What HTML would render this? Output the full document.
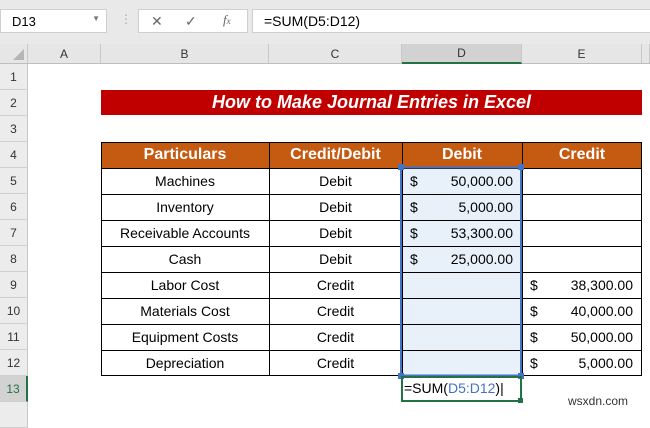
<!DOCTYPE html>
<html><head><style>
*{margin:0;padding:0;box-sizing:border-box}
body{width:650px;height:410px;background:#fff;position:relative;overflow:hidden;font-family:"Liberation Sans",sans-serif;color:#000}
.a{position:absolute}
.cell{position:absolute;display:flex;align-items:center;justify-content:center;font-size:14px}
.rh{position:absolute;left:0;width:28px;height:26px;background:#ececec;border-bottom:1px solid #d0d0d0;border-right:1px solid #c8c8c8;font-size:12px;color:#333;display:flex;align-items:center;justify-content:center}
.ch{position:absolute;top:44px;height:20px;background:#e6e6e6;border-right:1px solid #c8c8c8;border-bottom:1px solid #bdbdbd;font-size:12px;color:#333;display:flex;align-items:center;justify-content:center}
</style></head><body>
<div class="a" style="left:0;top:0;width:650px;height:44px;background:#e9e9e9"></div>
<div class="a" style="left:0;top:9px;width:107px;height:24px;background:#fff;border:1px solid #cfcfcf;font-size:13px;padding:4px 0 0 11px">D13<span style="position:absolute;right:6px;top:4px;font-size:8px;color:#777">▼</span></div>
<div class="a" style="left:120px;top:12px;font-size:12px;color:#aaa">⋮</div>
<div class="a" style="left:138px;top:9px;width:110px;height:24px;background:#fff;border:1px solid #cfcfcf;font-size:14px;color:#666">
<span class="a" style="left:12px;top:3px">✕</span><span class="a" style="left:46px;top:3px">✓</span><span class="a" style="left:84px;top:2px;font-family:'Liberation Serif',serif;font-style:italic;font-size:13px">f<span style="font-size:9px">x</span></span></div>
<div class="a" style="left:252px;top:9px;width:400px;height:24px;background:#fff;border:1px solid #cfcfcf;font-size:14px;padding:3px 0 0 11px">=SUM(D5:D12)</div>
<div class="a" style="left:0;top:44px;width:650px;height:20px;background:#e6e6e6"></div>
<div class="ch" style="left:0;width:28px"><span style="position:absolute;right:3px;bottom:3px;width:0;height:0;border-left:11px solid transparent;border-bottom:11px solid #b5b5b5"></span></div>
<div class="ch" style="left:28px;width:73px">A</div>
<div class="ch" style="left:101px;width:168px">B</div>
<div class="ch" style="left:269px;width:133px">C</div>
<div class="ch" style="left:402px;width:120px;background:#d2d2d2;border-bottom:2px solid #217346">D</div>
<div class="ch" style="left:522px;width:120px">E</div>
<div class="ch" style="left:642px;width:8px"></div>
<div class="rh" style="top:64px">1</div><div class="rh" style="top:90px">2</div><div class="rh" style="top:116px">3</div><div class="rh" style="top:142px">4</div><div class="rh" style="top:168px">5</div><div class="rh" style="top:194px">6</div><div class="rh" style="top:220px">7</div><div class="rh" style="top:246px">8</div><div class="rh" style="top:272px">9</div><div class="rh" style="top:298px">10</div><div class="rh" style="top:324px">11</div><div class="rh" style="top:350px">12</div><div class="rh" style="top:376px;background:#d2d2d2;border-right:2px solid #217346;color:#217346">13</div><div class="rh" style="top:402px"></div>
<div class="cell" style="left:101px;top:90px;width:541px;height:25px;background:#c00000;color:#fff;font-weight:bold;font-style:italic;font-size:18px">How to Make Journal Entries in Excel</div>
<div class="a" style="left:101px;top:142px;width:541px;height:26px;background:#c55a11"></div>
<div class="cell" style="left:101px;top:142px;width:168px;height:26px;color:#fff;font-weight:bold;font-size:16px">Particulars</div>
<div class="cell" style="left:269px;top:142px;width:133px;height:26px;color:#fff;font-weight:bold;font-size:16px">Credit/Debit</div>
<div class="cell" style="left:402px;top:142px;width:120px;height:26px;color:#fff;font-weight:bold;font-size:16px">Debit</div>
<div class="cell" style="left:522px;top:142px;width:120px;height:26px;color:#fff;font-weight:bold;font-size:16px">Credit</div>
<div class="a" style="left:402px;top:168px;width:120px;height:208px;background:#e8f0fa"></div>
<svg class="a" style="left:0;top:0" width="650" height="410">
<g stroke="#000" stroke-width="1" fill="none">
<rect x="101.5" y="142.5" width="540" height="233"/>
<path d="M269.5 142v234M402.5 142v234M522.5 142v234M101 168.5h541M101 194.5h541M101 220.5h541M101 246.5h541M101 272.5h541M101 298.5h541M101 324.5h541M101 350.5h541"/>
</g>
<rect x="401" y="167.5" width="120" height="208" fill="none" stroke="#4472c4" stroke-width="2"/>
<rect x="398" y="164" width="6" height="6" fill="#4472c4"/><rect x="518" y="164" width="6" height="6" fill="#4472c4"/>
<rect x="398" y="373" width="6" height="6" fill="#4472c4"/><rect x="518" y="373" width="6" height="6" fill="#4472c4"/>
<rect x="402" y="377" width="119" height="24" fill="none" stroke="#217346" stroke-width="2"/>
<rect x="518" y="398" width="5" height="5" fill="#217346"/>
</svg>
<div class="cell" style="left:101px;top:168px;width:168px;height:26px">Machines</div>
<div class="cell" style="left:101px;top:194px;width:168px;height:26px">Inventory</div>
<div class="cell" style="left:101px;top:220px;width:168px;height:26px">Receivable Accounts</div>
<div class="cell" style="left:101px;top:246px;width:168px;height:26px">Cash</div>
<div class="cell" style="left:101px;top:272px;width:168px;height:26px">Labor Cost</div>
<div class="cell" style="left:101px;top:298px;width:168px;height:26px">Materials Cost</div>
<div class="cell" style="left:101px;top:324px;width:168px;height:26px">Equipment Costs</div>
<div class="cell" style="left:101px;top:350px;width:168px;height:26px">Depreciation</div>
<div class="cell" style="left:269px;top:168px;width:133px;height:26px">Debit</div>
<div class="cell" style="left:269px;top:194px;width:133px;height:26px">Debit</div>
<div class="cell" style="left:269px;top:220px;width:133px;height:26px">Debit</div>
<div class="cell" style="left:269px;top:246px;width:133px;height:26px">Debit</div>
<div class="cell" style="left:269px;top:272px;width:133px;height:26px">Credit</div>
<div class="cell" style="left:269px;top:298px;width:133px;height:26px">Credit</div>
<div class="cell" style="left:269px;top:324px;width:133px;height:26px">Credit</div>
<div class="cell" style="left:269px;top:350px;width:133px;height:26px">Credit</div>
<div class="cell" style="left:402px;top:168px;width:120px;height:26px;justify-content:space-between;padding:0 9px 0 8px"><span>$</span><span>50,000.00</span></div>
<div class="cell" style="left:402px;top:194px;width:120px;height:26px;justify-content:space-between;padding:0 9px 0 8px"><span>$</span><span>5,000.00</span></div>
<div class="cell" style="left:402px;top:220px;width:120px;height:26px;justify-content:space-between;padding:0 9px 0 8px"><span>$</span><span>53,300.00</span></div>
<div class="cell" style="left:402px;top:246px;width:120px;height:26px;justify-content:space-between;padding:0 9px 0 8px"><span>$</span><span>25,000.00</span></div>
<div class="cell" style="left:522px;top:272px;width:120px;height:26px;justify-content:space-between;padding:0 9px 0 8px"><span>$</span><span>38,300.00</span></div>
<div class="cell" style="left:522px;top:298px;width:120px;height:26px;justify-content:space-between;padding:0 9px 0 8px"><span>$</span><span>40,000.00</span></div>
<div class="cell" style="left:522px;top:324px;width:120px;height:26px;justify-content:space-between;padding:0 9px 0 8px"><span>$</span><span>50,000.00</span></div>
<div class="cell" style="left:522px;top:350px;width:120px;height:26px;justify-content:space-between;padding:0 9px 0 8px"><span>$</span><span>5,000.00</span></div>
<div class="a" style="left:404px;top:380px;font-size:14px">=SUM(<span style="color:#4472c4">D5:D12</span>)|</div>
<div class="a" style="left:568px;top:394px;font-size:12px;color:#333">wsxdn.com</div>
</body></html>
